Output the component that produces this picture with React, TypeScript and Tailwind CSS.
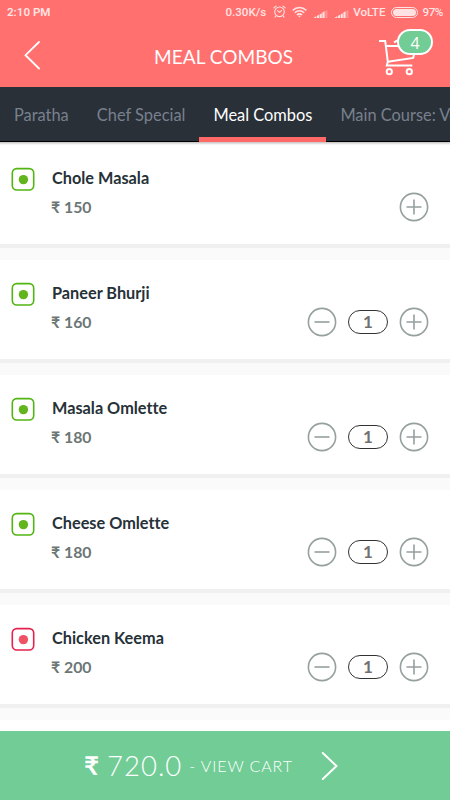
type Meal = { name: string; price: number; qty: number; veg: boolean };

const meals: Meal[] = [
  { name: 'Chole Masala', price: 150, qty: 0, veg: true },
  { name: 'Paneer Bhurji', price: 160, qty: 1, veg: true },
  { name: 'Masala Omlette', price: 180, qty: 1, veg: true },
  { name: 'Cheese Omlette', price: 180, qty: 1, veg: true },
  { name: 'Chicken Keema', price: 200, qty: 1, veg: false },
];

const tabs = ['Paratha', 'Chef Special', 'Meal Combos', 'Main Course: Ve'];
const activeTab = 'Meal Combos';

const AlarmIcon = () => (
  <svg width="13" height="13" viewBox="0 0 13 13" fill="none" stroke="currentColor" strokeWidth="1.1" strokeLinecap="round">
    <circle cx="6.5" cy="6.8" r="4.8" />
    <path d="M4.5 5.7 6.5 7.4l2-1.7M.9 2.9 3 1.1M12.1 2.9 10 1.1M2.9 11.2l-.9 1M10.1 11.2l.9 1" />
  </svg>
);

const WifiIcon = () => (
  <svg width="15" height="12" viewBox="0 0 15 12" fill="none" stroke="currentColor" strokeWidth="1.5">
    <path d="M.7 4.4c4-3.9 9.6-3.9 13.6 0M2.8 6.8c2.8-2.6 6.6-2.6 9.4 0M4.9 9c1.6-1.4 3.6-1.4 5.2 0" />
    <path d="M6 9.7h3L7.5 11.5z" fill="currentColor" stroke="none" />
  </svg>
);

const SignalIcon = ({ bars }: { bars: number }) => (
  <svg width="14" height="9" viewBox="0 0 14 9" fill="currentColor">
    {[1.5, 3, 4.5, 6.5, 8].map((h, i) => (
      <path key={i} d={`M${i * 2.8} 9V${9 - h + 1}l2.2-1.2V9z`} opacity={i < bars ? 1 : 0.3} />
    ))}
  </svg>
);

const StatusBar = () => (
  <div className="flex h-6 items-center pl-[7px] pr-[7px] text-[11.6px] font-medium text-[#ffe3e3]" style={{ fontFamily: 'Roboto, sans-serif' }}>
    <span className="mt-px font-semibold">2:10 PM</span>
    <span className="ml-auto mt-px">0.30K/s</span>
    <span className="ml-[7px] -mt-px"><AlarmIcon /></span>
    <span className="ml-[6px] -mt-px"><WifiIcon /></span>
    <span className="ml-[7px] mt-[2px]"><SignalIcon bars={4} /></span>
    <span className="ml-[7px] mt-[2px]"><SignalIcon bars={4} /></span>
    <span className="ml-[4px] mt-px">VoLTE</span>
    <span className="ml-[6px] h-[11px] w-[27px] rounded-full border border-[#ffe3e3] p-px">
      <span className="block h-full w-full rounded-full bg-[#ffe3e3]" />
    </span>
    <span className="ml-[4px] mt-px tracking-[-0.4px]">97%</span>
  </div>
);

const CartIcon = () => (
  <svg width="40" height="40" viewBox="0 0 40 40" fill="none" stroke="#fff" strokeWidth="2">
    <path d="M1 3h6.2l2.6 20.7-1 3.9h25.5" />
    <path d="M7.5 8H30M9.8 23.7l25.4-3.8 1.4-6M16 4.4l4-2.2" />
    <circle cx="11.3" cy="33.7" r="2.6" />
    <circle cx="31.3" cy="33.7" r="2.6" />
  </svg>
);

const Header = () => (
  <header className="h-[87px] bg-[#ff706f]">
    <StatusBar />
    <div className="flex h-[63px] items-center">
      <svg className="ml-6 -mt-[2px]" width="17" height="30" viewBox="0 0 17 30" fill="none" stroke="#fff" strokeWidth="1.8" strokeLinecap="round">
        <path d="M15 2 1.5 15.2 15 28.5" />
      </svg>
      <h1 className="ml-[113px] mt-[2px] w-[159px] whitespace-nowrap text-[19px] leading-6 tracking-[0.05px] text-white">MEAL COMBOS</h1>
      <div className="relative ml-[65px] mt-[5px]">
        <CartIcon />
        <span className="absolute left-[19px] -top-[9px] flex h-[26px] w-[36px] items-center justify-center rounded-full border-2 border-white bg-[#71cc96] pt-px text-[16px] text-white" style={{ fontFamily: '"Open Sans", sans-serif' }}>4</span>
      </div>
    </div>
  </header>
);

const TabBar = () => (
  <nav className="flex h-[55px] overflow-hidden bg-[#293038] text-[16.4px]">
    {tabs.map((t) => (
      <div key={t} className={`flex h-[55px] shrink-0 items-center whitespace-nowrap px-[14px] pt-[2px] ${t === activeTab ? 'border-y-5 border-t-transparent border-b-[#ff6968] text-white' : 'border-b border-black text-[#78808d]'}`}>
        {t}
      </div>
    ))}
  </nav>
);

const FoodMark = ({ veg }: { veg: boolean }) => (
  <svg width="24" height="24" viewBox="0 0 24 24" fill="none">
    <rect x="1.3" y="1.6" width="21.4" height="21.4" rx="4.5" stroke={veg ? '#52b512' : '#e5214e'} strokeWidth="1.6" />
    <circle cx="12.4" cy="12.6" r="4.7" fill={veg ? '#62b51c' : '#ef5264'} />
  </svg>
);

const RoundButton = ({ plus }: { plus?: boolean }) => (
  <button className="block h-[30px] w-[30px]" aria-label={plus ? 'Add' : 'Remove'}>
    <svg width="30" height="30" viewBox="0 0 30 30" fill="none" stroke="#95a09f" strokeWidth="1.6">
      <circle cx="15" cy="15" r="13.6" />
      <path d={plus ? 'M7.5 15h15M15 7.5v15' : 'M7.5 15h15'} />
    </svg>
  </button>
);

const MealRow = ({ meal }: { meal: Meal }) => (
  <li className="flex h-[115px] items-start border-b-[12px] border-[#fafafa]">
    <div className="flex h-[103px] w-full border-b-4 border-[#f0f0f0] bg-white">
      <div className="ml-[11px] mt-[22px]"><FoodMark veg={meal.veg} /></div>
      <div className="ml-[17px] mt-[22px] font-bold">
        <div className="text-[16.3px] leading-[22px] text-[#263238]" style={{ fontVariantLigatures: 'none' }}>{meal.name}</div>
        <div className="-ml-px mt-[7px] text-[15.8px] leading-[22px] text-[#6c7675]">₹ {meal.price}</div>
      </div>
      <div className="ml-auto mr-[21px] mt-[47px] flex h-[30px] items-center">
        {meal.qty > 0 && (
          <>
            <RoundButton />
            <span className="ml-[11px] mr-[11px] flex h-6 w-10 items-center justify-center rounded-full border border-[#333] text-[17px] font-bold text-[#707070]">{meal.qty}</span>
          </>
        )}
        <RoundButton plus />
      </div>
    </div>
  </li>
);

const CartFooter = () => (
  <footer className="flex h-[69px] shrink-0 items-center bg-[#71cc96] text-white">
    <div className="ml-[84px] flex w-[212px] items-center whitespace-nowrap font-light">
      <span className="text-[26px] font-bold">₹</span>
      <span className="ml-[8px] text-[27.5px] tracking-[1px]">720.0</span>
      <span className="ml-[7px] text-[16px] tracking-[0.9px]">- VIEW CART</span>
    </div>
    <svg className="ml-[25px]" width="18" height="30" viewBox="0 0 18 30" fill="none" stroke="#fff" strokeWidth="2" strokeLinecap="round">
      <path d="M1.8 2 15.5 15 1.8 28" />
    </svg>
  </footer>
);

export default function App() {
  return (
    <div className="flex h-[800px] w-[450px] flex-col overflow-hidden bg-white" style={{ fontFamily: 'Lato, sans-serif' }}>
      <Header />
      <TabBar />
      <main className="min-h-0 flex-1 overflow-hidden">
        <div className="h-[3px] bg-gradient-to-b from-[#c4c0c0] to-white" />
        <ul>
          {meals.map((m) => (
            <MealRow key={m.name} meal={m} />
          ))}
        </ul>
      </main>
      <CartFooter />
    </div>
  );
}
